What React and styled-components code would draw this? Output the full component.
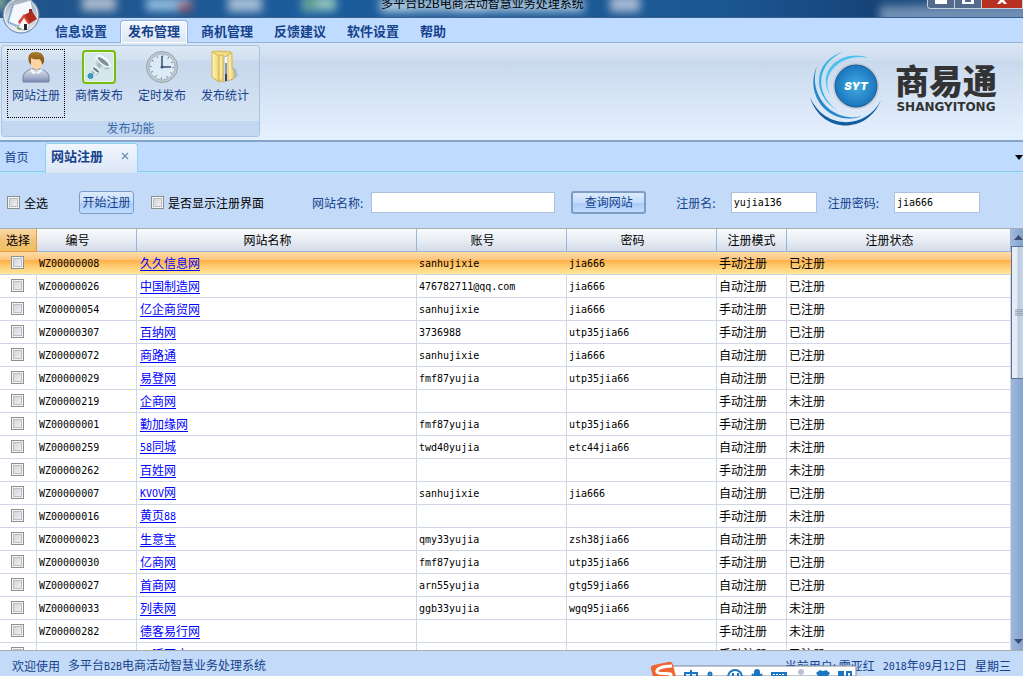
import styled, { createGlobalStyle, css } from 'styled-components'

const sites = [
   ['WZ00000008', '久久信息网', 'sanhujixie', 'jia666', '手动注册', '已注册'],
   ['WZ00000026', '中国制造网', '476782711@qq.com', 'jia666', '自动注册', '已注册'],
   ['WZ00000054', '亿企商贸网', 'sanhujixie', 'jia666', '手动注册', '已注册'],
   ['WZ00000307', '百纳网', '3736988', 'utp35jia66', '手动注册', '已注册'],
   ['WZ00000072', '商路通', 'sanhujixie', 'jia666', '自动注册', '已注册'],
   ['WZ00000029', '易登网', 'fmf87yujia', 'utp35jia66', '自动注册', '已注册'],
   ['WZ00000219', '企商网', '', '', '手动注册', '未注册'],
   ['WZ00000001', '勤加缘网', 'fmf87yujia', 'utp35jia66', '手动注册', '已注册'],
   ['WZ00000259', '58同城', 'twd40yujia', 'etc44jia66', '自动注册', '未注册'],
   ['WZ00000262', '百姓网', '', '', '手动注册', '未注册'],
   ['WZ00000007', 'KVOV网', 'sanhujixie', 'jia666', '自动注册', '已注册'],
   ['WZ00000016', '黄页88', '', '', '手动注册', '未注册'],
   ['WZ00000023', '生意宝', 'qmy33yujia', 'zsh38jia66', '自动注册', '未注册'],
   ['WZ00000030', '亿商网', 'fmf87yujia', 'utp35jia66', '手动注册', '已注册'],
   ['WZ00000027', '首商网', 'arn55yujia', 'gtg59jia66', '自动注册', '已注册'],
   ['WZ00000033', '列表网', 'ggb33yujia', 'wgq95jia66', '自动注册', '未注册'],
   ['WZ00000282', '德客易行网', '', '', '手动注册', '未注册'],
   ['', '一呼百应', '', '', '手动注册', '已注册'],
]

const columns = ['选择', '编号', '网站名称', '账号', '密码', '注册模式', '注册状态']
const sortableColumns = ['编号', '网站名称', '账号', '密码', '注册状态']
const menus = ['信息设置', '发布管理', '商机管理', '反馈建议', '软件设置', '帮助']

export default function App() {
   return (
      <>
         <GlobalStyle />
         <Window>
            <TitleBar>
               <Glass />
               <Title>多平台B2B电商活动智慧业务处理系统</Title>
               <WindowButtons />
            </TitleBar>

            <MenuBar>
               {menus.map(menu => (
                  <MenuItem key={menu} active={menu === '发布管理'}>
                     {menu}
                  </MenuItem>
               ))}
            </MenuBar>
            <HomeButton aria-label="主菜单">
               <HomeIcon />
            </HomeButton>

            <Ribbon>
               <RibbonGroup>
                  <RibbonItems>
                     <RibbonButton focused>
                        <UserIcon />
                        网站注册
                     </RibbonButton>
                     <RibbonButton>
                        <BroadcastIcon />
                        商情发布
                     </RibbonButton>
                     <RibbonButton>
                        <ClockIcon />
                        定时发布
                     </RibbonButton>
                     <RibbonButton>
                        <FolderIcon />
                        发布统计
                     </RibbonButton>
                  </RibbonItems>
                  <RibbonCaption>发布功能</RibbonCaption>
               </RibbonGroup>
               <Brand>
                  <BrandMark />
                  <div>
                     <BrandName>商易通</BrandName>
                     <BrandLatin>SHANGYITONG</BrandLatin>
                  </div>
               </Brand>
            </Ribbon>

            <TabStrip>
               <HomeTab>首页</HomeTab>
               <PageTab>
                  网站注册
                  <CloseTab aria-label="关闭">
                     <svg width="8" height="8" viewBox="0 0 8 8">
                        <path d="M1 1l6 6M7 1L1 7" stroke="#6b93b8" strokeWidth="1.4" />
                     </svg>
                  </CloseTab>
               </PageTab>
               <TabFill>
                  <svg width="8" height="5" viewBox="0 0 8 5">
                     <path d="M0 0h8L4 5z" fill="#000" />
                  </svg>
               </TabFill>
            </TabStrip>

            <Filters>
               <CheckLabel>
                  <Check />
                  全选
               </CheckLabel>
               <StartButton>开始注册</StartButton>
               <CheckLabel>
                  <Check />
                  是否显示注册界面
               </CheckLabel>
               <SiteField>
                  网站名称:
                  <TextBox size="wide" />
               </SiteField>
               <SearchButton>查询网站</SearchButton>
               <NameField>
                  注册名:
                  <TextBox defaultValue="yujia136" />
               </NameField>
               <PasswordField>
                  注册密码:
                  <TextBox defaultValue="jia666" />
               </PasswordField>
            </Filters>

            <GridArea>
               <GridView>
                  <Table>
                     <colgroup>
                        <Col width="37px" />
                        <Col width="100px" />
                        <Col width="280px" />
                        <Col width="150px" />
                        <Col width="150px" />
                        <Col width="70px" />
                        <Col />
                     </colgroup>
                     <thead>
                        <tr>
                           {columns.map((column, i) => (
                              <HeadCell key={column} sorted={i === 0} sortable={sortableColumns.includes(column)}>
                                 {column}
                              </HeadCell>
                           ))}
                        </tr>
                     </thead>
                     <tbody>
                        {sites.map(([code, name, account, password, mode, status], i) => (
                           <Row key={name} selected={i === 0}>
                              <CheckCell>
                                 <Check aria-label={name} />
                              </CheckCell>
                              <CodeCell>{code}</CodeCell>
                              <Cell>
                                 <SiteLink href="#">
                                    <Mixed>{name}</Mixed>
                                 </SiteLink>
                              </Cell>
                              <CodeCell>{account}</CodeCell>
                              <CodeCell>{password}</CodeCell>
                              <Cell>{mode}</Cell>
                              <Cell>{status}</Cell>
                           </Row>
                        ))}
                     </tbody>
                  </Table>
               </GridView>
               <ScrollBar>
                  <ScrollArrow aria-label="向上滚动">
                     <svg width="9" height="5" viewBox="0 0 9 5">
                        <path d="M0 5L4.5 0 9 5z" fill="#3c4c72" />
                     </svg>
                  </ScrollArrow>
                  <ScrollThumb>
                     <svg width="9" height="8" viewBox="0 0 9 8">
                        <path d="M0 .5h9M0 2.5h9M0 4.5h9M0 6.5h9" stroke="#8b97a8" />
                     </svg>
                  </ScrollThumb>
                  <ScrollArrow aria-label="向下滚动">
                     <svg width="9" height="5" viewBox="0 0 9 5">
                        <path d="M0 0h9L4.5 5z" fill="#3c4c72" />
                     </svg>
                  </ScrollArrow>
               </ScrollBar>
            </GridArea>

            <StatusBar>
               <span>欢迎使用</span>
               <span>
                  <Mixed>多平台B2B电商活动智慧业务处理系统</Mixed>
               </span>
               <StatusUser>当前用户: 霍亚红</StatusUser>
               <span>
                  <Mixed>2018年09月12日</Mixed>
               </span>
               <span>星期三</span>
            </StatusBar>
            <InputMethod>
               <InputMethodIcons />
            </InputMethod>
         </Window>
      </>
   )
}

// Latin letters and digits take half the width of a Chinese character
const Mixed = ({ children }) =>
   children.split(/([A-Za-z0-9]+)/).map((part, i) => (i % 2 ? <Half key={i}>{part}</Half> : part))

const Check = props => <CheckBox type="checkbox" {...props} />

const Glass = () => (
   <GlassArt viewBox="0 0 1023 17" preserveAspectRatio="none">
      <defs>
         <filter id="soft" x="-50%" y="-100%" width="200%" height="300%">
            <feGaussianBlur stdDeviation="4" />
         </filter>
      </defs>
      <g filter="url(#soft)">
         <rect x="-8" y="-6" width="14" height="16" fill="#7ba58f" />
         <rect x="82" y="-4" width="34" height="15" fill="#a9b9cd" />
         <rect x="146" y="-2" width="44" height="13" fill="#8fbbdf" />
         <rect x="178" y="2" width="14" height="9" fill="#a2545c" />
         <rect x="228" y="-4" width="34" height="16" fill="#a3bcd6" />
         <rect x="302" y="-4" width="34" height="15" fill="#8cc0bd" />
         <rect x="304" y="-2" width="12" height="10" fill="#4d9a7c" />
         <rect x="380" y="-2" width="204" height="14" fill="#9fbfdb" />
         <rect x="382" y="6" width="30" height="6" fill="#bcd3e6" />
         <rect x="455" y="4" width="30" height="8" fill="#c3d8ea" />
         <rect x="610" y="-4" width="30" height="16" fill="#a7b8d2" />
         <rect x="880" y="6" width="150" height="20" fill="#6f8fb3" />
      </g>
   </GlassArt>
)

const HomeIcon = () => (
   <svg width="38" height="38" viewBox="0 0 38 38">
      <defs>
         <radialGradient id="orb" cx="50%" cy="75%" r="75%">
            <stop offset="0" stopColor="#fdfdfe" />
            <stop offset=".6" stopColor="#cfd5de" />
            <stop offset="1" stopColor="#8d9bb2" />
         </radialGradient>
      </defs>
      <circle cx="19" cy="19" r="18" fill="url(#orb)" stroke="#6a83a7" />
      <circle cx="19" cy="19" r="16.5" fill="none" stroke="#eef2f7" />
      <path d="M11 9l18-5 2 11-14 15-11-4z" fill="#f4f7fb" stroke="#a9b5c5" />
      <path d="M11 9L6 26l10 5" fill="none" stroke="#5c9bd1" strokeWidth="2" strokeDasharray="1 1" />
      <path d="M17 25l5-6 5 8v6l-5 1-5-2z" fill="#fafafa" stroke="#adb1bb" />
      <path d="M27 27l7-4v5l-7 5z" fill="#d5d8de" />
      <path d="M22 19l8-4 5 8-8 5z" fill="#b22a20" />
      <path d="M16 26l6-8 6 9-2 1-4-6-4 6z" fill="#d8473c" />
      <path d="M27 13h3v4h-3z" fill="#8f2a22" />
      <path d="M22 28h3v6h-3z" fill="#1f2942" />
      <path d="M14 31l4 1 2 2-4-.5z" fill="#63a441" />
   </svg>
)

const UserIcon = () => (
   <svg width="32" height="32" viewBox="0 0 32 32">
      <defs>
         <linearGradient id="shirt" x1="0" y1="0" x2="0" y2="1">
            <stop offset="0" stopColor="#dde3ee" />
            <stop offset=".6" stopColor="#a9b2cb" />
            <stop offset="1" stopColor="#7c88ae" />
         </linearGradient>
         <linearGradient id="hair" x1="0" y1="0" x2="0" y2="1">
            <stop offset="0" stopColor="#a97a2c" />
            <stop offset="1" stopColor="#7d4c12" />
         </linearGradient>
      </defs>
      <path d="M3 31v-4c0-5 4-8 9-9h8c5 1 9 4 9 9v4z" fill="url(#shirt)" stroke="#7482a6" />
      <path d="M13 15l3 5 5-5z" fill="#e9b27c" />
      <path d="M12 18l4 4 5-4 2 1-5 4-2-1-3 1-3-4z" fill="#f6f8fc" />
      <ellipse cx="16.5" cy="11" rx="6" ry="7" fill="#ffd3a2" />
      <path d="M9 11C7 4 10 1 16 1s9 4 8 10l-2 3c0-3-1-5-3-6-3 1-6 0-8-1l0 7z" fill="url(#hair)" />
   </svg>
)

const BroadcastIcon = () => (
   <svg width="34" height="34" viewBox="0 0 34 34">
      <defs>
         <linearGradient id="cone" x1="0" y1="0" x2="1" y2="0">
            <stop offset="0" stopColor="#f8fbfc" />
            <stop offset=".45" stopColor="#9db1bc" />
            <stop offset=".7" stopColor="#dde8ec" />
            <stop offset="1" stopColor="#8fa6b2" />
         </linearGradient>
      </defs>
      <rect x="1" y="1" width="32" height="32" rx="3" fill="#d4e8ec" stroke="#78bc12" strokeWidth="2" />
      <rect x="2.5" y="2.5" width="29" height="29" rx="2" fill="none" stroke="#eef7df" />
      <g transform="rotate(38 21 12)">
         <path d="M12 11c0 5 4 8 9 8s9-3 9-8z" fill="url(#cone)" />
         <ellipse cx="21" cy="11" rx="9" ry="4" fill="#f4f8fa" />
         <ellipse cx="21" cy="11.5" rx="7" ry="2" fill="#7d929e" />
      </g>
      <g transform="rotate(38 14 20)">
         <path d="M9 20c0 3 2 5 5 5s5-2 5-5z" fill="url(#cone)" />
         <ellipse cx="14" cy="20" rx="5" ry="2.5" fill="#f4f8fa" />
         <ellipse cx="14" cy="20" rx="4" ry="1.3" fill="#6f8592" />
      </g>
      <circle cx="8.5" cy="26" r="2.5" fill="#3e9bc7" stroke="#2b8ab5" />
   </svg>
)

const ClockIcon = () => (
   <svg width="34" height="34" viewBox="0 0 34 34">
      <circle cx="17" cy="17" r="15.5" fill="#c3cad0" stroke="#98a3ad" />
      <circle cx="17" cy="17" r="13" fill="#dcebf5" stroke="#9fb0bf" />
      <circle cx="17" cy="17" r="11" fill="none" stroke="#7b8fa2" strokeDasharray="1 4.76" strokeWidth="2" />
      <path d="M17 6v11h9" fill="none" stroke="#34506e" strokeWidth="1.5" />
      <circle cx="17" cy="17" r="1.5" fill="#34506e" />
   </svg>
)

const FolderIcon = () => (
   <svg width="34" height="34" viewBox="0 0 34 34">
      <defs>
         <linearGradient id="folder" x1="0" y1="0" x2="1" y2="0">
            <stop offset="0" stopColor="#fff5bd" />
            <stop offset="1" stopColor="#edd376" />
         </linearGradient>
      </defs>
      <path d="M23 31l7-5-2-7-5-2z" fill="#8e9db3" opacity=".5" />
      <path d="M4 2l5-1 14 1v26l-9 4z" fill="#f1dc86" stroke="#d5b64c" />
      <path d="M16 7l5-2v25l-5 2z" fill="#fafafa" stroke="#a9b3c1" />
      <path d="M17 13h2v18h-2z" fill="#8c96a8" />
      <path d="M17 24h2v7h-2z" fill="#3d4453" />
      <path d="M20 5l4-2v16l2 2v7l-6 3z" fill="url(#folder)" stroke="#d5b64c" />
      <path d="M4 2l7 4v26l-7-5z" fill="url(#folder)" stroke="#d5b64c" />
      <path d="M11 6l4-1v24l-4 3z" fill="#f7e698" stroke="#d5b64c" />
   </svg>
)

const BrandMark = () => (
   <svg width="74" height="80" viewBox="0 1 74 80">
      <defs>
         <radialGradient id="syt">
            <stop offset="0" stopColor="#42abe2" />
            <stop offset="1" stopColor="#1b76bd" />
         </radialGradient>
      </defs>
      <path d="M34 4C5 12 1 46 29 63 4 45 8 15 34 4z" fill="#38b3e5" />
      <path d="M60 10C34 0 6 22 21 47 10 24 35 4 60 10z" fill="#4dc2ee" />
      <path d="M8 18C-6 48 22 80 53 68 25 76-2 48 8 18z" fill="#2586c8" />
      <path d="M1 49C12 86 58 87 72 52 57 82 15 82 1 49z" fill="#145d9f" />
      <circle cx="47" cy="38" r="23" fill="#c6cbd2" />
      <circle cx="47" cy="38" r="21" fill="url(#syt)" stroke="#155c9f" />
      <text
         x="47"
         y="42"
         textAnchor="middle"
         fontFamily="Inter, sans-serif"
         fontStyle="italic"
         fontWeight="900"
         fontSize="11"
         fill="#fff"
      >
         SYT
      </text>
   </svg>
)

const InputMethodIcons = () => (
   <svg width="208" height="16" viewBox="0 0 208 16">
      <path d="M20 16V7q0-1 1-1h184q1 0 1 1v9z" fill="#fff" stroke="#7d8796" />
      <path d="M1 9q-1-3 3-4l14-3q4-1 5 3l3 12H3z" fill="#ee6532" />
      <path d="M22 6C12 6 6 9 7 12s15 0 14 3-2 3-6 4" fill="none" stroke="#fff" strokeWidth="3" />
      <g transform="translate(0 3)">
         <g fill="none" stroke="#1b75c0" strokeWidth="2">
            <path d="M35 14v-4h12v4M41 7v9" />
            <circle cx="60" cy="11" r="1.5" />
            <circle cx="85" cy="14" r="7" />
            <path d="M83 10v4M88 10v4" />
         </g>
         <rect x="104" y="6" width="6" height="10" rx="3" fill="#1b75c0" />
         <path d="M102 11q5 6 10 0" stroke="#1b75c0" fill="none" strokeWidth="2" />
         <path d="M121 9h16v8h-16z" fill="#1b75c0" />
         <path d="M123 11.5h12" stroke="#fff" strokeDasharray="2 1" />
         <circle cx="151" cy="9" r="3" fill="#b9c4d4" />
         <path d="M166 10l4-3q3 2 6 0l4 3-2 3v3h-10v-3z" fill="#1b75c0" />
         <path d="M188 8h6v8h-6z" fill="#1b75c0" />
         <path d="M197 9h4v6h-4z" fill="none" stroke="#1b75c0" strokeWidth="2" />
      </g>
   </svg>
)

const WindowButtons = () => (
   <WindowControls>
      <WindowControl aria-label="最小化">
         <svg width="12" height="5" viewBox="0 0 12 5">
            <path d="M0 0h12v4H0z" fill="#fff" />
         </svg>
      </WindowControl>
      <WindowControl aria-label="最大化">
         <svg width="12" height="5" viewBox="0 0 12 5">
            <path d="M0 0h12v4H0z" fill="#fff" />
            <path d="M3 0h6v2H3z" fill="#536a8c" />
         </svg>
      </WindowControl>
      <WindowControl aria-label="关闭窗口" danger>
         <svg width="12" height="5" viewBox="0 0 12 5">
            <path d="M1 4h3l2-2 2 2h3L8 0H4z" fill="#fff" />
         </svg>
      </WindowControl>
   </WindowControls>
)

const GlobalStyle = createGlobalStyle`
  * {
    box-sizing: border-box;
  }

  body {
    margin: 0;
    background: #bfdbff;
    color: #000;
    font: 12px/16px 'Noto Sans CJK SC', sans-serif;
    overflow: hidden;
  }

  button,
  input {
    margin: 0;
    padding: 0;
    font: inherit;
    color: inherit;
  }
`

const mono = css`
  font-family: 'DejaVu Sans Mono', monospace;
  font-size: 10px;
`

const Half = styled.span`
  ${mono}
`

const Window = styled.div`
  position: relative;
  display: flex;
  flex-direction: column;
  height: 100vh;
  overflow: hidden;
`

const TitleBar = styled.header`
  position: relative;
  display: flex;
  justify-content: center;
  height: 18px;
  flex: none;
  overflow: hidden;
  background: linear-gradient(90deg, #215388, #1c5c9c 30%, #1b5893 70%, #164479 85%, #3d6490);
  border-bottom: 1px solid #38608f;
`

const GlassArt = styled.svg`
  position: absolute;
  inset: 0;
  width: 100%;
  height: 17px;
`

const Title = styled.div`
  position: relative;
  height: 16px;
  margin-top: -5px;
  margin-left: -58px;
`

const WindowControls = styled.div`
  position: absolute;
  top: 0;
  right: 0;
  display: flex;
  height: 9px;
  border: 1px solid #c6d0dd;
  border-width: 0 0 1px 1px;
  border-radius: 0 0 0 4px;
  overflow: hidden;
`

const WindowControl = styled.button.withConfig({ shouldForwardProp: prop => prop !== 'danger' })`
  display: flex;
  justify-content: center;
  width: ${({ danger }) => (danger ? '41px' : '27px')};
  border: 0;
  border-right: 1px solid #c6d0dd;
  background: ${({ danger }) => (danger ? '#b8301f' : '#536a8c')};
`

const MenuBar = styled.nav`
  display: flex;
  align-items: flex-end;
  flex: none;
  height: 25px;
  padding-left: 47px;
  border-bottom: 1px solid #8db2e3;
`

const MenuItem = styled.button.withConfig({ shouldForwardProp: prop => prop !== 'active' })`
  height: 23px;
  padding: 0 7px 2px;
  margin-right: 5px;
  margin-bottom: -1px;
  border: 1px solid transparent;
  border-bottom: 0;
  border-radius: 4px 4px 0 0;
  background: none;
  color: #15428b;
  font-size: 13px;
  font-weight: 700;
  line-height: 16px;

  ${({ active }) =>
     active &&
     css`
       border-color: #8db2e3;
       background: linear-gradient(#f4f8fe, #dbe6f4);
       box-shadow: inset 0 0 0 1px #fff;
     `}
`

const HomeButton = styled.button`
  position: absolute;
  top: -4px;
  left: 2px;
  width: 38px;
  height: 38px;
  border: 0;
  background: none;
`

const Ribbon = styled.section`
  display: flex;
  justify-content: space-between;
  flex: none;
  height: 99px;
  padding: 2px 26px 3px 1px;
  background: linear-gradient(#dbe6f4, #cfddef 17px, #c9d9ed 18px, #e5f0fe 94px);
  border-bottom: 2px solid #86a3c8;
`

const RibbonGroup = styled.div`
  display: flex;
  flex-direction: column;
  height: 92px;
  border: 1px solid #a9c3e2;
  border-radius: 3px;
  background: linear-gradient(#dde8f5, #d2dfef 14px, #c7d8ed 15px, #d9e6f5);
`

const RibbonItems = styled.div`
  display: flex;
  gap: 5px;
  padding: 3px 5px;
  flex: 1;
`

const RibbonButton = styled.button.withConfig({ shouldForwardProp: prop => prop !== 'focused' })`
  display: flex;
  flex-direction: column;
  align-items: center;
  gap: 3px;
  width: 58px;
  height: 69px;
  border: 1px ${({ focused }) => (focused ? 'dotted #000' : 'solid transparent')};
  background: none;
  color: #15428b;
  white-space: nowrap;

  & svg {
    height: 34px;
    flex: none;
  }
`

const RibbonCaption = styled.div`
  height: 16px;
  background: #c1d8f0;
  color: #3e6aaa;
  text-align: center;
  line-height: 14px;
`

const Brand = styled.div`
  display: flex;
  align-items: center;
  gap: 12px;
  height: 88px;
  color: #333;
  text-align: center;
`

const BrandName = styled.div`
  font-size: 34px;
  font-weight: 900;
  line-height: 36px;
`

const BrandLatin = styled.div`
  font: 700 12px/18px 'DejaVu Sans', sans-serif;
`

const TabStrip = styled.nav`
  display: flex;
  flex: none;
  height: 31px;
  color: #15428b;
`

const HomeTab = styled.button`
  width: 45px;
  padding: 0 12px 0 0;
  border: 0;
  border-bottom: 1px solid #a6f0fa;
  box-shadow: inset 0 -1px #9cc0ee;
  background: none;
  color: #15428b;
`

const PageTab = styled.div`
  display: flex;
  align-items: center;
  justify-content: space-between;
  width: 93px;
  padding: 0 8px 5px 5px;
  margin-top: 1px;
  border: 1px solid #8ed3ee;
  border-bottom: 0;
  border-radius: 3px 3px 0 0;
  background: linear-gradient(#f1f6fd, #dbe6f6);
  font-size: 13px;
  font-weight: 700;
`

const CloseTab = styled.button`
  display: flex;
  border: 0;
  background: none;
`

const TabFill = styled.div`
  display: flex;
  align-items: center;
  justify-content: flex-end;
  flex: 1;
  border-bottom: 1px solid #a6f0fa;
  box-shadow: inset 0 -1px #9cc0ee;
`

const Filters = styled.form`
  display: flex;
  align-items: center;
  flex: none;
  height: 55px;
  padding: 4px 43px 0 7px;
  background: #c3daf9;
  color: #15428b;
`

const CheckLabel = styled.label`
  display: flex;
  align-items: center;
  gap: 4px;
  color: #000;
`

const CheckBox = styled.input`
  appearance: none;
  display: block;
  width: 13px;
  height: 13px;
  border: 1px solid #8e8f8f;
  background: linear-gradient(135deg, #cbcfd5, #f6f6f6);
  box-shadow: inset 0 0 0 1px #f4f4f4, inset 0 0 0 2px #b9bec6;
`

const FormButton = styled.button`
  height: 23px;
  padding-bottom: 2px;
  border: 1px solid #7b9bc7;
  border-radius: 3px;
  background: linear-gradient(#dceafc, #c5dcfb 50%, #a9cbf7 51%, #c2dcff);
  color: #15428b;
`

const StartButton = styled(FormButton)`
  width: 55px;
  margin: 0 17px 0 31px;
`

const SearchButton = styled(FormButton)`
  width: 75px;
  border: 2px solid #7e9dc6;
`

const Field = styled.label`
  display: flex;
  align-items: center;
`

const SiteField = styled(Field)`
  flex: 1;
  gap: 8px;
  margin: 0 16px 0 48px;
`

const NameField = styled(Field)`
  gap: 15px;
  margin-left: 30px;
`

const PasswordField = styled(Field)`
  gap: 15px;
  margin-left: 11px;
`

const TextBox = styled.input.withConfig({ shouldForwardProp: prop => prop !== 'size' })`
  ${mono}
  width: 86px;
  height: 21px;
  padding: 0 2px;
  border: 1px solid #abc1de;
  background: #fff;
  color: #000;

  ${({ size }) =>
     size === 'wide' &&
     css`
       flex: 1;
       min-width: 80px;
     `}
`

const GridArea = styled.main`
  display: flex;
  flex: 1;
  min-height: 0;
  border-top: 1px solid #a9adb3;
  border-bottom: 1px solid #a9adb3;
`

const GridView = styled.div`
  flex: 1;
  overflow: hidden;
  background: #fff;
`

const Table = styled.table`
  width: 100%;
  table-layout: fixed;
  border-collapse: separate;
  border-spacing: 0;
`

const Col = styled.col`
  width: ${({ width }) => width || 'auto'};
`

const HeadCell = styled.th.withConfig({ shouldForwardProp: prop => !['sorted', 'sortable'].includes(prop) })`
  height: 23px;
  padding: 0 ${({ sortable }) => (sortable ? '18px' : '0')} 0 0;
  border-right: 1px solid ${({ sorted }) => (sorted ? '#f0953a' : '#9ab6d6')};
  border-bottom: 1px solid ${({ sorted }) => (sorted ? '#f0953a' : '#9ab6d6')};
  background: ${({ sorted }) =>
     sorted ? 'linear-gradient(#f9d9a5, #f1c27b 50%, #efc15f)' : 'linear-gradient(#f8fbfc, #e8edf4 50%, #d4dbe9)'};
  font-weight: 400;
`

const Cell = styled.td`
  height: 23px;
  padding: 0 2px;
  border-right: 1px solid #d0d7e5;
  border-bottom: 1px solid #d0d7e5;
  white-space: nowrap;
`

const CodeCell = styled(Cell)`
  ${mono}
  padding: 2px 2px 0;
`

const CheckCell = styled(Cell)`
  padding: 0 0 1px 11px;
`

const Row = styled.tr.withConfig({ shouldForwardProp: prop => prop !== 'selected' })`
  ${({ selected }) =>
     selected &&
     css`
       background: linear-gradient(#fcdba8, #fbc57c 36%, #ffb048 37%, #ffd37d 70%, #ffe89a);

       & td {
         border-right-color: transparent;
       }
     `}
`

const SiteLink = styled.a`
  margin-left: 1px;
  color: #00f;
  text-underline-offset: 2px;
`

const ScrollBar = styled.div`
  display: flex;
  flex-direction: column;
  width: 12px;
  overflow: hidden;
  background: linear-gradient(90deg, #a0b9dc, #84a3ce);
`

const ScrollArrow = styled.button`
  display: flex;
  align-items: center;
  height: 17px;
  padding-left: 3px;
  border: 0;
  background: none;

  &:last-child {
    margin-top: auto;
  }
`

const ScrollThumb = styled.div`
  display: flex;
  align-items: center;
  height: 133px;
  padding-left: 3px;
  border: 1px solid #59709b;
  border-right: 0;
  background: linear-gradient(90deg, #e7edf5 5px, #b9cae0 6px, #ccd8e8);
`

const StatusBar = styled.footer`
  display: flex;
  align-items: center;
  gap: 8px;
  flex: none;
  height: 25px;
  padding: 4px 12px 0;
  background: #c3daf9;
  color: #15428b;
  white-space: nowrap;
`

const StatusUser = styled.span`
  margin-left: auto;
`

const InputMethod = styled.div`
  position: absolute;
  right: 165px;
  bottom: 0;
  display: flex;
`
